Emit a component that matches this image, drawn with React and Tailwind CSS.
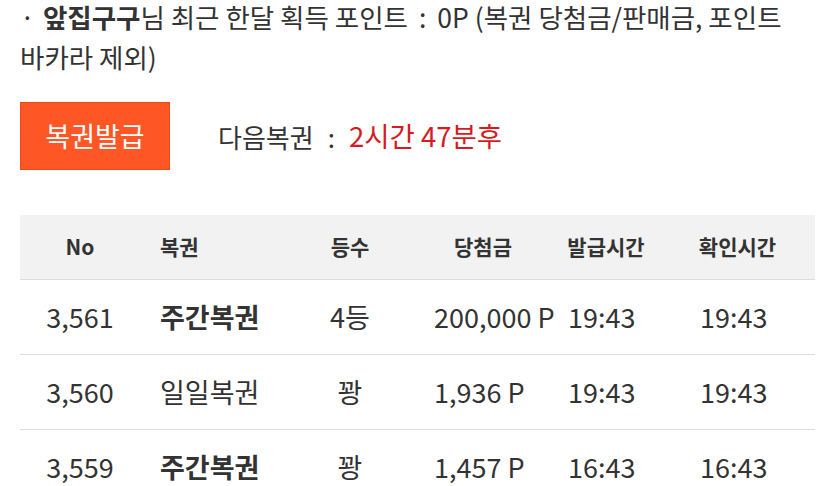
export default function App() {
  const rows = [
    { no: "3,561", name: "주간복권", bold: true, rank: "4등", prize: "200,000 P", issued: "19:43", checked: "19:43" },
    { no: "3,560", name: "일일복권", bold: false, rank: "꽝", prize: "1,936 P", issued: "19:43", checked: "19:43" },
    { no: "3,559", name: "주간복권", bold: true, rank: "꽝", prize: "1,457 P", issued: "16:43", checked: "16:43" },
  ];
  const font = { fontFamily: '"Noto Sans CJK KR", "Noto Sans", sans-serif' };
  return (
    <div className="w-[835px] h-[486px] overflow-hidden bg-white text-[#333]" style={font}>
      <p className="px-5 mt-[-3px] text-[26.5px] leading-[40px] break-keep">
        <span className="mr-[8px]">·</span>
        <b className="font-bold">앞집구구</b>님 최근 한달 획득 포인트<span className="mx-[11px]">:</span>0P (복권 당첨금/판매금, 포인트 바카라 제외)
      </p>
      <div className="flex items-center mt-[25px] px-5">
        <div className="w-[150px] h-[68px] bg-[#ff5626] border border-[#e9491c] flex items-center justify-center text-white text-[27px]">
          복권발급
        </div>
        <div className="ml-12 text-[26px] flex items-center">
          <span>다음복권</span>
          <span className="mx-[14px]">:</span>
          <span className="text-[#d41c22] text-[27.5px]">2시간 47분후</span>
        </div>
      </div>
      <div className="mx-5 mt-[45px]">
        <div className="grid grid-cols-[120px_160px_100px_160px_100px_155px] h-[65px] items-center bg-[#f2f2f2] border-b border-[#dcdcdc] text-[21px] font-bold">
          <div className="text-center">No</div>
          <div className="pl-5">복권</div>
          <div className="text-center">등수</div>
          <div className="text-center pl-[6px]">당첨금</div>
          <div className="text-center pr-2">발급시간</div>
          <div className="text-center">확인시간</div>
        </div>
        {rows.map((r, i) => (
          <div key={i} className="grid grid-cols-[120px_160px_100px_160px_100px_155px] h-[75px] items-center border-b border-[#dcdcdc] text-[27px]">
            <div className="text-center">{r.no}</div>
            <div className={`pl-5 ${r.bold ? "font-bold" : ""}`}>{r.name}</div>
            <div className="text-center">{r.rank}</div>
            <div className="pl-[34px]">{r.prize}</div>
            <div className="pl-2">{r.issued}</div>
            <div className="pl-10">{r.checked}</div>
          </div>
        ))}
      </div>
    </div>
  );
}
